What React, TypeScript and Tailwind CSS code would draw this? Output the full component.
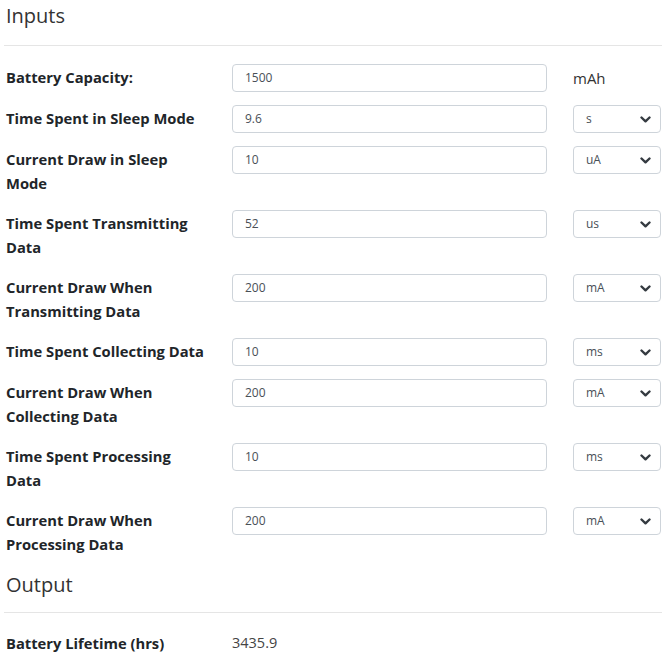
import React from "react";

type Field = {
  label: string;
  value: string;
  unit: string;
  options?: string[];
};

const fields: Field[] = [
  { label: "Battery Capacity:", value: "1500", unit: "mAh" },
  { label: "Time Spent in Sleep Mode", value: "9.6", unit: "s", options: ["s", "ms", "us"] },
  { label: "Current Draw in Sleep Mode", value: "10", unit: "uA", options: ["uA", "mA"] },
  { label: "Time Spent Transmitting Data", value: "52", unit: "us", options: ["s", "ms", "us"] },
  { label: "Current Draw When Transmitting Data", value: "200", unit: "mA", options: ["uA", "mA"] },
  { label: "Time Spent Collecting Data", value: "10", unit: "ms", options: ["s", "ms", "us"] },
  { label: "Current Draw When Collecting Data", value: "200", unit: "mA", options: ["uA", "mA"] },
  { label: "Time Spent Processing Data", value: "10", unit: "ms", options: ["s", "ms", "us"] },
  { label: "Current Draw When Processing Data", value: "200", unit: "mA", options: ["uA", "mA"] },
];

const Chevron = () => (
  <svg width="11" height="7" viewBox="0 0 11 7" className="text-[#343a40]">
    <path d="M1.5 1.5 L5.5 5.3 L9.5 1.5" fill="none" stroke="currentColor" strokeWidth="2.4" strokeLinecap="round" strokeLinejoin="round" />
  </svg>
);

const InputRow = ({ field }: { field: Field }) => (
  <div className="flex items-start mb-[13px]">
    <div className="w-[232px] pl-[6px]">
      <label className="block w-[200px] pt-[1px] pb-[2px] text-[14.75px] leading-[24px] font-bold text-[#212529]">
        {field.label}
      </label>
    </div>
    <div className="w-[315px] h-[28px] border border-[#ced4da] rounded-[4px] flex items-center pl-[12px] text-[12px] text-[#495057] bg-white">
      {field.value}
    </div>
    <div className="ml-[26px] w-[88px]">
      {field.options ? (
        <div className="h-[28px] border border-[#ced4da] rounded-[4px] flex items-center justify-between pl-[12px] pr-[9px] text-[12px] text-[#495057] bg-white">
          <span>{field.unit}</span>
          <Chevron />
        </div>
      ) : (
        <div className="h-[28px] flex items-center text-[15px] text-[#333]">{field.unit}</div>
      )}
    </div>
  </div>
);

export default function App() {
  return (
    <div className="w-[672px] h-[657px] bg-white overflow-hidden" style={{ fontFamily: '"Open Sans", "Noto Sans", sans-serif' }}>
      <h2 className="pt-[2px] pl-[6px] text-[20px] leading-[28px] text-[#333]">Inputs</h2>
      <hr className="mt-[15px] mx-[4px] w-[658px] border-t border-[#e5e5e5]" />
      <div className="mt-[18px]">
        {fields.map((f) => (
          <InputRow key={f.label} field={f} />
        ))}
      </div>
      <h2 className="pl-[6px] text-[20px] leading-[28px] text-[#333]">Output</h2>
      <hr className="mt-[13px] mx-[4px] w-[658px] border-t border-[#e5e5e5]" />
      <div className="flex items-center mt-[18px]">
        <div className="w-[232px] pl-[6px] text-[14.75px] leading-[24px] font-bold text-[#212529]">Battery Lifetime (hrs)</div>
        <div className="text-[14.5px] leading-[24px] text-[#444]">3435.9</div>
      </div>
    </div>
  );
}
